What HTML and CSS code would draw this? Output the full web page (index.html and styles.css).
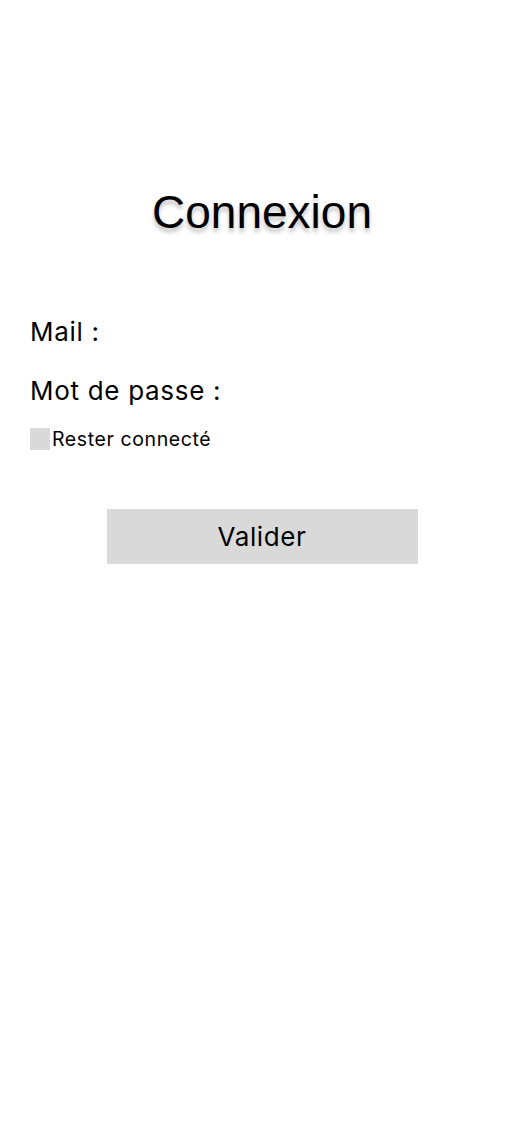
FILE: index.html
```html
<!DOCTYPE html>
<html lang="fr">
<head>
<meta charset="utf-8">
<title>Connexion</title>
<link rel="stylesheet" href="styles.css">
</head>
<body>
<main class="page">
  <h1 class="title">Connexion</h1>
  <form class="form">
    <label class="field">Mail :</label>
    <label class="field">Mot de passe :</label>
    <label class="remember"><span class="box"></span>Rester connecté</label>
    <button type="button" class="submit">Valider</button>
  </form>
</main>
</body>
</html>
```

FILE: styles.css
```css
html, body {
  margin: 0;
  padding: 0;
  background: #ffffff;
}
body {
  font-family: Inter, "Noto Sans", sans-serif;
  color: #000;
  width: 524px;
  height: 1143px;
}
.page {
  display: flex;
  flex-direction: column;
  padding-top: 184px;
}
.title {
  margin: 0;
  font-family: "Liberation Sans", Arial, sans-serif;
  font-weight: 400;
  font-size: 46px;
  line-height: 56px;
  text-align: center;
  text-shadow: 0 4px 4px rgba(0, 0, 0, 0.25);
}
.form {
  display: flex;
  flex-direction: column;
  padding: 0 30px;
  margin-top: 77px;
}
.field {
  font-size: 26px;
  line-height: 30px;
  letter-spacing: 0.7px;
  margin-bottom: 29px;
}
.remember {
  display: flex;
  align-items: center;
  font-size: 19.5px;
  letter-spacing: 0.6px;
  line-height: 22px;
  margin-top: -7px;
}
.box {
  width: 20px;
  height: 22px;
  background: #d9d9d9;
  margin-right: 2px;
}
.submit {
  align-self: center;
  margin-top: 59px;
  width: 311px;
  height: 55px;
  border: none;
  background: #d9d9d9;
  font-family: Inter, "Noto Sans", sans-serif;
  font-size: 26px;
  letter-spacing: 0.6px;
  color: #000;
  padding: 0;
}
```
